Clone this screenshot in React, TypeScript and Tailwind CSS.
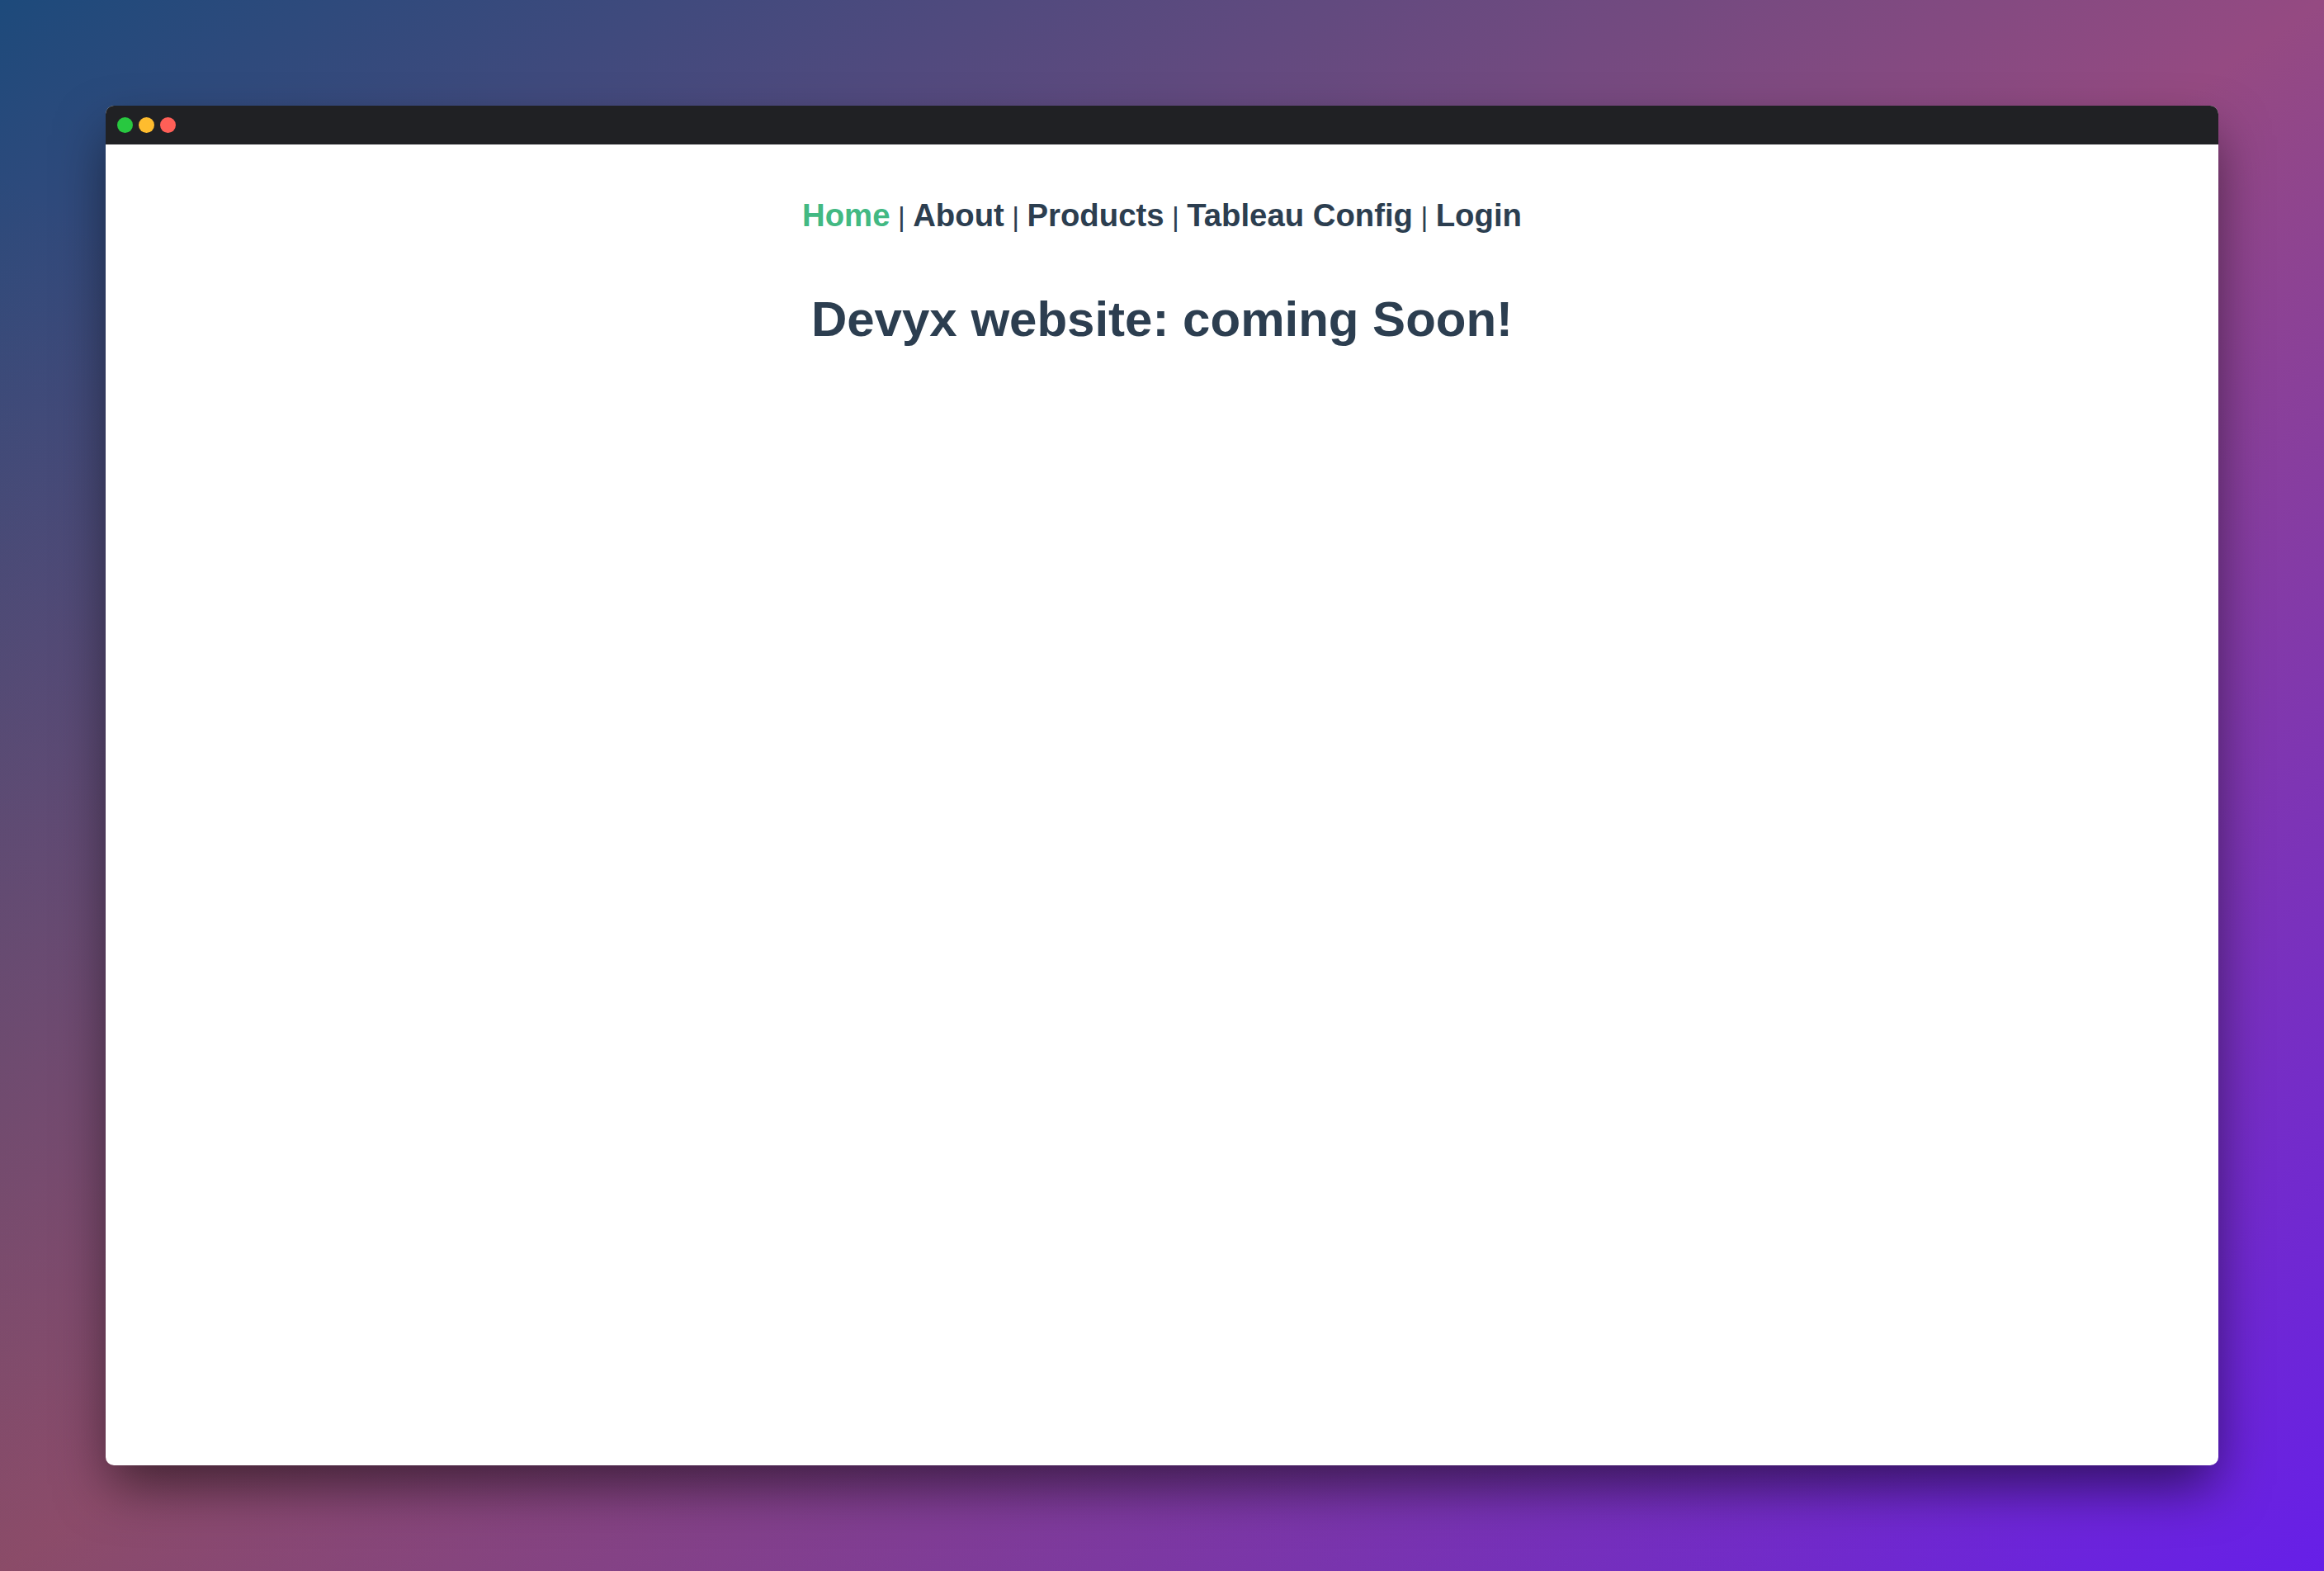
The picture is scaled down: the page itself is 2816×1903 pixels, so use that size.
import React from 'react';

const links = ['Home', 'About', 'Products', 'Tableau Config', 'Login'];

function TrafficLights() {
  return (
    <div className="flex items-center gap-[7px] pl-[14px]">
      <span className="w-[19px] h-[19px] rounded-full bg-[#28c840]" />
      <span className="w-[19px] h-[19px] rounded-full bg-[#febc2e]" />
      <span className="w-[19px] h-[19px] rounded-full bg-[#ff5f57]" />
    </div>
  );
}

export default function App() {
  return (
    <div className="min-h-screen w-full p-32 bg-[linear-gradient(to_top_right,rgba(110,80,30,0.26),transparent_45%),linear-gradient(to_bottom_right,#1d4a7b,#954a82_50%,#661fe8)]">
      {/* Browser window */}
      <div className="h-[1647px] flex flex-col rounded-[10px] overflow-hidden bg-white shadow-[0_30px_64px_-6px_rgba(0,0,0,0.55)]">
        <div className="h-[47px] shrink-0 flex items-center bg-[#202124]">
          <TrafficLights />
        </div>

        <div className="flex-1 text-center text-[#2c3e50] font-['Liberation_Sans',Arial,sans-serif]">
          {/* Nav */}
          <nav className="pt-[65px] text-[38.3px] leading-[42px]">
            {links.map((label, i) => (
              <React.Fragment key={label}>
                {i > 0 && <span className="font-normal text-[34px]"> | </span>}
                <a className={i === 0 ? 'font-bold text-[#42b983]' : 'font-bold text-[#2c3e50]'}>
                  {label}
                </a>
              </React.Fragment>
            ))}
          </nav>

          {/* Page */}
          <h2 className="mt-[70px] text-[60px] leading-[68px] font-bold">
            Devyx website: coming Soon!
          </h2>
        </div>
      </div>
    </div>
  );
}
